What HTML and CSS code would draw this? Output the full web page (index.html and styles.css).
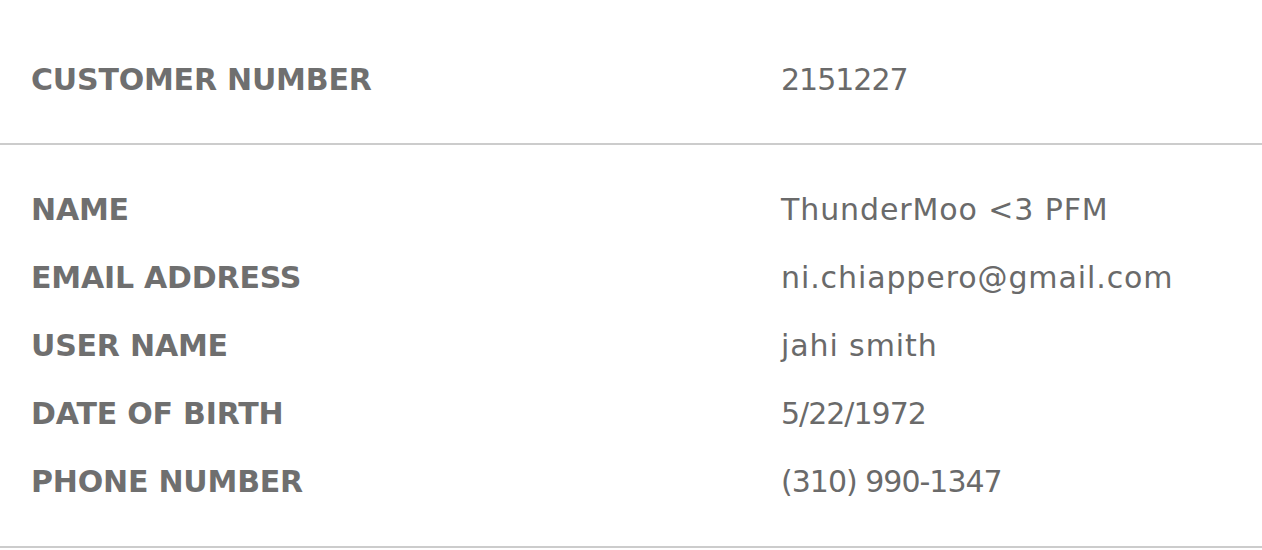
FILE: index.html
```html
<!DOCTYPE html>
<html lang="en">
<head>
<meta charset="utf-8">
<title>Account details</title>
<link rel="stylesheet" href="styles.css">
</head>
<body>
<div class="details">
  <section class="group group-top">
    <div class="row"><div class="label">CUSTOMER NUMBER</div><div class="value value-num">2151227</div></div>
  </section>
  <section class="group group-main">
    <div class="row"><div class="label">NAME</div><div class="value">ThunderMoo &lt;3 PFM</div></div>
    <div class="row"><div class="label">EMAIL ADDRESS</div><div class="value">ni.chiappero@gmail.com</div></div>
    <div class="row"><div class="label">USER NAME</div><div class="value">jahi smith</div></div>
    <div class="row"><div class="label">DATE OF BIRTH</div><div class="value value-num">5/22/1972</div></div>
    <div class="row"><div class="label">PHONE NUMBER</div><div class="value value-num">(310) 990-1347</div></div>
  </section>
</div>
</body>
</html>
```
FILE: styles.css
```css
html, body {
  margin: 0;
  padding: 0;
  background: #ffffff;
}
body {
  font-family: "DejaVu Sans", "Noto Sans", sans-serif;
  color: #6f6f6f;
}
.details {
  width: 1262px;
}
.group {
  border-bottom: 2px solid #cccccc;
  display: flex;
  flex-direction: column;
  box-sizing: border-box;
}
.group-top {
  padding-top: 45px;
  height: 145px;
}
.group-main {
  padding-top: 30px;
  height: 403px;
}
.row {
  display: grid;
  grid-template-columns: 750px 1fr;
  padding-left: 31px;
  height: 68px;
  align-items: center;
}
.label {
  font-weight: bold;
  font-size: 30px;
  letter-spacing: -0.2px;
  color: #6f6f6f;
}
.value {
  font-size: 30px;
  letter-spacing: 0.9px;
  color: #6a6a6a;
}
.value-num {
  letter-spacing: -1px;
}
```
